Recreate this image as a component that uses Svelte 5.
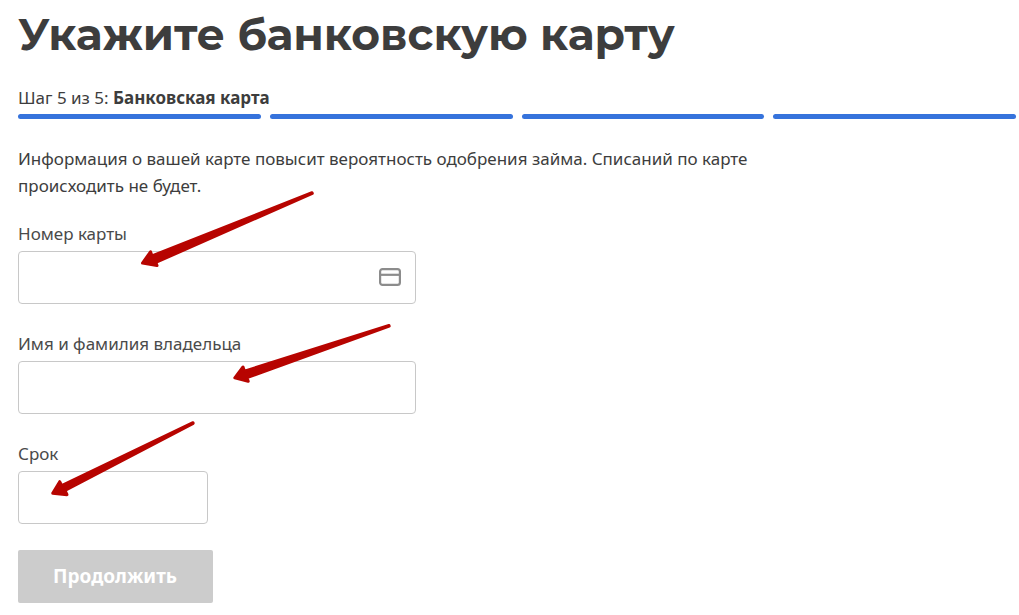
<script lang="ts">
  const totalBars = 4;

  let cardNumber = $state('');
  let holder = $state('');
  let expiry = $state('');
</script>

<main class="page">
  <h1>Укажите банковскую карту</h1>

  <div class="step">Шаг 5 из 5: <strong>Банковская карта</strong></div>
  <div class="progress">
    {#each Array(totalBars) as _}
      <span class="bar"></span>
    {/each}
  </div>

  <p class="info">
    Информация о вашей карте повысит вероятность одобрения займа. Списаний по карте происходить не будет.
  </p>

  <form onsubmit={(e) => e.preventDefault()}>
    <div class="field">
      <label for="card-number">Номер карты</label>
      <div class="control">
        <input id="card-number" type="text" inputmode="numeric" bind:value={cardNumber} />
        <svg class="card-icon" viewBox="0 0 22 18" aria-hidden="true">
          <rect x="1.1" y="1.1" width="19.8" height="15.8" rx="2.4" />
          <path d="M1 6.8H21" />
        </svg>
        <svg class="arrow" aria-hidden="true">
          <path d="M124.5 12L132.5 0.8L134 4.8L294 -58.3L294.3 -57.7L137.8 11.4L139 14.5Z" />
        </svg>
      </div>
    </div>

    <div class="field">
      <label for="holder">Имя и фамилия владельца</label>
      <div class="control">
        <input id="holder" type="text" bind:value={holder} />
        <svg class="arrow" aria-hidden="true">
          <path d="M216.8 16.8L225 6L226.5 10.2L371 -35.5L371.2 -34.9L229 16.6L230.2 20.3Z" />
        </svg>
      </div>
    </div>

    <div class="field">
      <label for="expiry">Срок</label>
      <div class="control short">
        <input id="expiry" type="text" inputmode="numeric" bind:value={expiry} />
        <svg class="arrow" aria-hidden="true">
          <path d="M34.7 22.2L41.7 10.7L43.7 14.7L175 -48.3L175.2 -47.7L47 19.3L49 23.7Z" />
        </svg>
      </div>
    </div>

    <button type="submit">Продолжить</button>
  </form>
</main>

<style>
  :global(body) {
    margin: 0;
    background: #fff;
  }

  .page {
    padding: 7px 3px 12px 18px;
    font-family: "Noto Sans", sans-serif;
    font-size: 17px;
    line-height: 27px;
    color: #3d3d3d;
  }

  h1 {
    margin: 0 0 23px;
    font-family: Montserrat, Inter, sans-serif;
    font-size: 44px;
    font-weight: 700;
    line-height: 54px;
  }

  .step {
    margin-bottom: 3px;
  }

  .step strong {
    font-weight: 700;
  }

  .progress {
    display: flex;
    gap: 9px;
    margin-bottom: 26px;
  }

  .bar {
    flex: 1;
    height: 5px;
    border-radius: 3px;
    background: #3673dc;
  }

  .info {
    max-width: 750px;
    margin: 0 0 21px;
  }

  form {
    display: flex;
    flex-direction: column;
    align-items: flex-start;
    gap: 26px;
  }

  .field {
    display: flex;
    flex-direction: column;
    gap: 4px;
    width: 100%;
    max-width: 398px;
  }

  label {
    color: #4a4a4a;
  }

  .control {
    position: relative;
  }

  .control.short {
    max-width: 190px;
  }

  input {
    display: block;
    box-sizing: border-box;
    width: 100%;
    height: 53px;
    padding: 0 16px;
    border: 1px solid #c8c8c8;
    border-radius: 4px;
    background: #fff;
    font: inherit;
    color: inherit;
  }

  .card-icon {
    position: absolute;
    top: 17px;
    right: 15px;
    width: 22px;
    height: 18px;
    fill: none;
    stroke: #8c8c8c;
    stroke-width: 2.2;
  }

  /* pointer drawn over the field, starts outside of its box */
  .arrow {
    position: absolute;
    inset: 0;
    width: 100%;
    height: 100%;
    overflow: visible;
    pointer-events: none;
    fill: #b70400;
    stroke: #b70400;
    stroke-width: 3;
    stroke-linejoin: round;
  }

  button {
    height: 53px;
    padding: 0 36px 2px 35px;
    border: 0;
    border-radius: 2px;
    background: #ccc;
    font-family: inherit;
    font-size: 19px;
    font-weight: 700;
    color: #fff;
    cursor: pointer;
  }
</style>
